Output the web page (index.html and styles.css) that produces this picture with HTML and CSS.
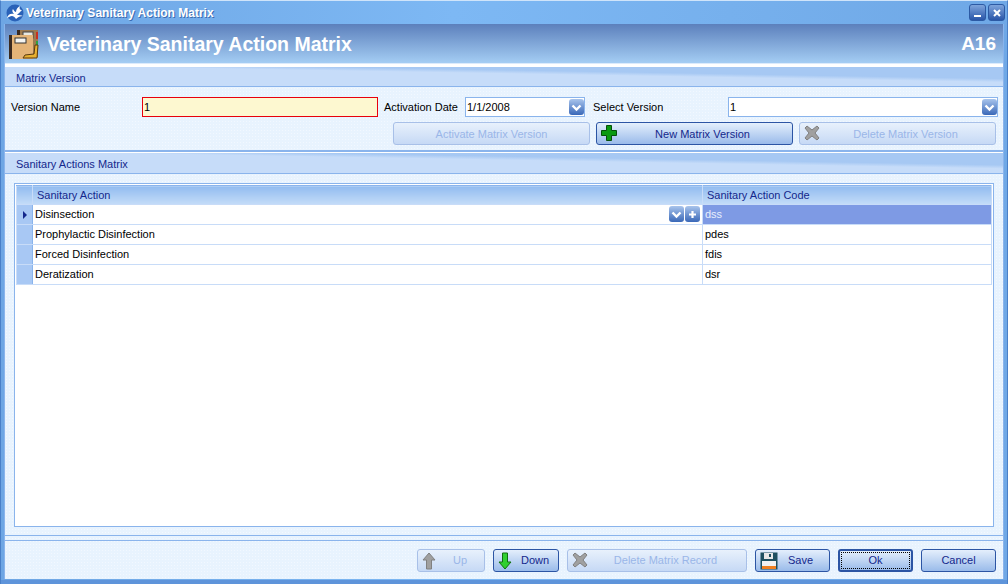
FILE: index.html
```html
<!DOCTYPE html>
<html lang="en">
<head>
<meta charset="UTF-8" />
<title>Veterinary Sanitary Action Matrix</title>
<link rel="stylesheet" href="styles.css">
</head>
<body>

<div class="window">
  <div class="titlebar">
    <svg class="appIcon" width="18" height="18" viewBox="0 0 18 18">
      <circle cx="9" cy="9" r="8.5" fill="#2a62b8"/>
      <path d="M1 14 C2 10 5 9 8 10 C6 8 6 6 7 5 C8 7 9 8 10 8 C10 5 12 3 14 2 C13 5 14 6 16 6 C14 8 12 10 11 11 C13 11 15 11 17 12 C14 12 12 13 10 15 C9 13 7 12 6 12 C4 12 3 13 1 14Z" fill="#fff"/>
    </svg>
    <span class="titleText">Veterinary Sanitary Action Matrix</span>
    <span class="winBtn"><svg width="10" height="10" viewBox="0 0 10 10"><rect x="1" y="7" width="7" height="2" fill="#fff"/></svg></span>
    <span class="winBtn"><svg width="10" height="10" viewBox="0 0 10 10"><path d="M2 2 L8 8 M8 2 L2 8" stroke="#fff" stroke-width="2"/></svg></span>
  </div>

  <div class="content">
    <div class="header">
      <svg class="headerIcon" width="31" height="31" viewBox="0 0 31 31">
        <rect x="9" y="1" width="21" height="27" fill="#9c7a50"/>
        <rect x="9" y="1" width="3" height="8" fill="#3a2a20"/>
        <rect x="15" y="3" width="10" height="6" fill="#e8e8e0" stroke="#444"/>
        <rect x="28" y="3" width="2" height="7" fill="#c83020"/>
        <rect x="28" y="12" width="2" height="6" fill="#30a040"/>
        <rect x="1" y="6" width="24" height="24" fill="#e4b478"/>
        <rect x="1" y="6" width="3" height="24" fill="#3a2a20"/>
        <rect x="7" y="9" width="11" height="5" fill="#f4f4f0" stroke="#333"/>
        <path d="M15 29 L29 29 L30 16 L27 16 L26 25 L17 26Z" fill="#e8b030" stroke="#5a3a10"/>
      </svg>
      <span class="headerTitle">Veterinary Sanitary Action Matrix</span>
      <span class="headerCode">A16</span>
    </div>

    <div class="sectionBar sectionFirst">Matrix Version</div>
    <div class="versionForm">
      <div class="fieldRow">
        <label class="labelName">Version Name</label>
        <div class="input inputRequired">1</div>
        <label class="labelDate">Activation Date</label>
        <div class="input">1/1/2008<span class="dropBtn"><svg width="13" height="13" viewBox="0 0 13 13"><path d="M2.5 4.5 L6.5 8.5 L10.5 4.5" fill="none" stroke="#fff" stroke-width="2.4"/></svg></span></div>
        <label class="labelSelect">Select Version</label>
        <div class="input">1<span class="dropBtn"><svg width="13" height="13" viewBox="0 0 13 13"><path d="M2.5 4.5 L6.5 8.5 L10.5 4.5" fill="none" stroke="#fff" stroke-width="2.4"/></svg></span></div>
      </div>
      <div class="buttonRow">
        <button class="btn btnWide" disabled>Activate Matrix Version</button>
        <button class="btn btnWide btnIconed"><svg class="btnIcon" width="16" height="16" viewBox="0 0 16 16"><path d="M5.5 .5 H10.5 V5.5 H15.5 V10.5 H10.5 V15.5 H5.5 V10.5 H.5 V5.5 H5.5Z" fill="#0a9a10" stroke="#06500a"/></svg>New Matrix Version</button>
        <button class="btn btnWide btnIconed" disabled><svg class="btnIcon" width="16" height="16" viewBox="0 0 16 16"><path d="M1 3 L3 1 L8 5 L13 1 L15 3 L11 8 L15 13 L13 15 L8 11 L3 15 L1 13 L5 8Z" fill="#a0a0a0" stroke="#808080"/></svg>Delete Matrix Version</button>
      </div>
    </div>

    <div class="sectionBar sectionSecond">Sanitary Actions Matrix</div>
    <div class="gridArea">
      <div class="gridPanel">
        <table class="grid">
          <colgroup><col class="colHead"><col class="colAction"><col></colgroup>
          <thead>
            <tr><th></th><th>Sanitary Action</th><th>Sanitary Action Code</th></tr>
          </thead>
          <tbody>
            <tr>
              <td class="rowHead"><span class="rowArrow"></span></td>
              <td><div class="cellEdit">Disinsection
                <span class="cellBtns">
                  <span class="miniBtn"><svg width="13" height="13" viewBox="0 0 13 13"><path d="M2.5 4.5 L6.5 8.5 L10.5 4.5" fill="none" stroke="#fff" stroke-width="2.4"/></svg></span>
                  <span class="miniBtn"><svg width="13" height="13" viewBox="0 0 13 13"><path d="M6.5 3 V10 M3 6.5 H10" stroke="#fff" stroke-width="2.2"/></svg></span>
                </span></div></td>
              <td class="cellSelected">dss</td>
            </tr>
            <tr><td class="rowHead"></td><td>Prophylactic Disinfection</td><td>pdes</td></tr>
            <tr><td class="rowHead"></td><td>Forced Disinfection</td><td>fdis</td></tr>
            <tr><td class="rowHead"></td><td>Deratization</td><td>dsr</td></tr>
          </tbody>
        </table>
      </div>
    </div>

    <div class="footer">
      <button class="btn btnUp" disabled><svg class="btnIcon" width="14" height="18" viewBox="0 0 14 18"><path d="M7 1 L13 8 H9.5 V17 H4.5 V8 H1Z" fill="#a0a0a0" stroke="#808080"/></svg>Up</button>
      <button class="btn btnDown"><svg class="btnIcon" width="14" height="18" viewBox="0 0 14 18"><path d="M7 17 L13 10 H9.5 V1 H4.5 V10 H1Z" fill="#30d030" stroke="#107010"/></svg>Down</button>
      <button class="btn btnRecord" disabled><svg class="btnIcon" width="16" height="16" viewBox="0 0 16 16"><path d="M1 3 L3 1 L8 5 L13 1 L15 3 L11 8 L15 13 L13 15 L8 11 L3 15 L1 13 L5 8Z" fill="#a0a0a0" stroke="#808080"/></svg>Delete Matrix Record</button>
      <button class="btn btnSmall btnIconed"><svg class="btnIcon" width="18" height="18" viewBox="0 0 18 18"><rect x=".5" y=".5" width="17" height="17" fill="#1f5060"/><rect x="4" y="1" width="9" height="6" fill="#e8e8e8"/><rect x="9" y="2" width="2" height="3" fill="#1f5060"/><rect x="2" y="9" width="14" height="8" fill="#f2f2f2"/><rect x="2" y="14" width="14" height="3" fill="#f08020"/></svg>Save</button>
      <button class="btn btnSmall btnDefault"><span class="focusBox">Ok</span></button>
      <button class="btn btnSmall">Cancel</button>
    </div>
  </div>
</div>

</body>
</html>
```

FILE: styles.css
```css
* {
  box-sizing: border-box;
}
html, body {
  margin: 0;
  height: 100%;
}
body {
  font-family: "Liberation Sans", Arial, sans-serif;
  font-size: 11px;
  color: #000;
  overflow: hidden;
}
.window {
  width: 1008px;
  height: 584px;
  display: flex;
  flex-direction: column;
  background: linear-gradient(90deg, #6ea6e4, #7db8f4 45%, #6fa8e6);
  border: 1px solid #4a80c8;
  border-top: 1px solid #cfe4fa;
  border-bottom: none;
  box-shadow: inset 0 -4px 0 #5e94da;
}
.titlebar {
  height: 23px;
  display: flex;
  align-items: center;
  padding: 0 2px 0 5px;
  flex: none;
}
.appIcon {
  margin-right: 2px;
}
.titleText {
  flex: 1;
  color: #fff;
  font-weight: bold;
  font-size: 12px;
  text-shadow: 1px 1px 0 #3c6cb0;
}
.winBtn {
  width: 17px;
  height: 17px;
  margin-left: 2px;
  border-radius: 3px;
  display: flex;
  align-items: center;
  justify-content: center;
  background: linear-gradient(#7ea4dc, #2a56a8);
  border: 1px solid #2c5aa4;
}
.content {
  flex: 1;
  display: flex;
  flex-direction: column;
  margin: 0 3px 5px 3px;
  background-color: #e8f3fe;
  background-image: radial-gradient(#f2f8ff 0.7px, transparent 0.7px);
  background-size: 3px 3px;
  border-right: 1px solid #8ab4ec;
  border-left: 1px solid #8ab4ec;
  min-height: 0;
}
.header {
  height: 40px;
  flex: none;
  display: flex;
  align-items: center;
  padding: 0 7px 0 3px;
  background: linear-gradient(#5c80bc, #a6cff5);
}
.headerIcon {
  margin-right: 8px;
}
.headerTitle, .headerCode {
  color: #fff;
  font-weight: bold;
  font-size: 19.5px;
}
.headerCode {
  font-size: 19px;
}
.headerTitle {
  flex: 1;
}
.sectionBar {
  flex: none;
  display: flex;
  align-items: center;
  padding-left: 11px;
  color: #14288c;
  border-bottom: 1px solid #8ab4ec;
  background: linear-gradient(181deg, #a6c8f3 32%, #c6dcf9 42%);
}
.sectionFirst {
  height: 23px;
  padding-top: 2px;
  border-top: 3px solid #fff;
  box-shadow: 0 -1px 0 #dcebfc;
}
.sectionSecond {
  height: 22px;
  padding-top: 1px;
  border-top: 1px solid #fff;
  box-shadow: 0 -2px 0 #8ab4ec;
}
.versionForm {
  height: 65px;
  flex: none;
  padding: 10px 5px 0 6px;
}
.fieldRow {
  display: grid;
  grid-template-columns: 131px 236px 87px 120px 143px 270px;
  align-items: center;
  height: 20px;
}
.labelDate {
  padding-left: 6px;
}
.labelSelect {
  padding-left: 8px;
}
.input {
  height: 20px;
  display: flex;
  align-items: center;
  justify-content: space-between;
  padding: 0 0 0 1px;
  background: #fff;
  border: 1px solid #8ab4ec;
}
.inputRequired {
  background: #fdf8d0;
  border: 1px solid #e8000c;
}
.dropBtn, .miniBtn {
  width: 15px;
  height: 16px;
  border-radius: 3px;
  display: inline-flex;
  align-items: center;
  justify-content: center;
  background: linear-gradient(#a8c4ec, #3a68b8);
}
.buttonRow {
  display: flex;
  justify-content: flex-end;
  gap: 6px;
  margin-top: 5px;
  padding-right: 2px;
}
.btn {
  height: 23px;
  display: flex;
  align-items: center;
  justify-content: center;
  position: relative;
  padding: 0;
  font: inherit;
  color: #14288c;
  border: 1px solid #2c55a4;
  border-radius: 3px;
  background: linear-gradient(#e4effc, #9abbea);
}
.btn:disabled {
  color: #9ab6e8;
  border-color: #a8c0e8;
  background: linear-gradient(#e8f1fc, #c6d9f5);
}
.btnIcon {
  position: absolute;
  left: 4px;
  top: 2px;
}
.btnWide {
  width: 197px;
}
.btnIconed {
  padding-left: 16px;
}
.gridArea {
  flex: 1;
  min-height: 0;
  padding: 9px 9px 8px 9px;
  border-bottom: 1px solid #8ab4ec;
}
.gridPanel {
  height: 100%;
  padding: 1px;
  background: #fff;
  border: 1px solid #8ab4ec;
}
.grid {
  width: 100%;
  table-layout: fixed;
  border-collapse: collapse;
}
.colHead {
  width: 16px;
}
.colAction {
  width: 670px;
}
.grid th {
  height: 19px;
  padding: 0 0 0 4px;
  text-align: left;
  font-weight: normal;
  color: #14288c;
  background: linear-gradient(#92bcf0, #c4dcf8);
  border: 1px solid #c8dcf8;
  border-top: 1px solid #8ab4ec;
}
.grid td {
  height: 20px;
  padding: 0 0 1px 2px;
  border: 1px solid #c8dcf8;
  border-top: none;
}
.grid td.rowHead {
  padding: 0;
  background: #a8c8f4;
  border-right: 1px solid #8ab4ec;
}
.rowArrow {
  display: block;
  width: 0;
  height: 0;
  margin-left: 6px;
  border-left: 4px solid #14288c;
  border-top: 4px solid transparent;
  border-bottom: 4px solid transparent;
}
.cellEdit {
  display: flex;
  justify-content: space-between;
  align-items: center;
}
.cellBtns {
  display: flex;
  gap: 1px;
  margin-right: 2px;
}
.grid td.cellSelected {
  background: #7e9ae4;
  color: #e8eefc;
}
.footer {
  height: 39px;
  flex: none;
  margin-top: 4px;
  display: flex;
  justify-content: flex-end;
  align-items: center;
  gap: 8px;
  padding-right: 7px;
  border-top: 1px solid #8ab4ec;
}
.btnUp {
  width: 68px;
  padding-left: 18px;
}
.btnDown {
  width: 66px;
  padding-left: 18px;
}
.btnRecord {
  width: 180px;
  padding-left: 17px;
}
.btnSmall {
  width: 75px;
}
.btnDefault {
  border-width: 2px;
}
.focusBox {
  width: 69px;
  height: 17px;
  line-height: 15px;
  border: 1px dotted #000;
}
```
